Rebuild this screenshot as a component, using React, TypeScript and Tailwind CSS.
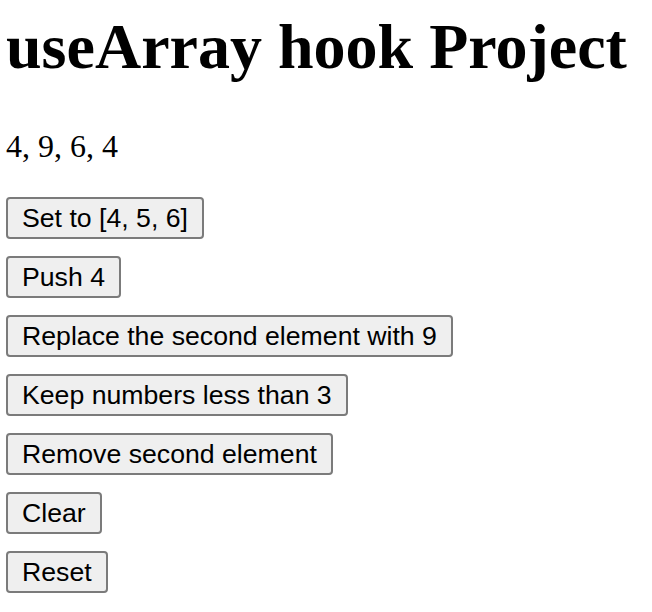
import React from 'react';

const buttons = [
  'Set to [4, 5, 6]',
  'Push 4',
  'Replace the second element with 9',
  'Keep numbers less than 3',
  'Remove second element',
  'Clear',
  'Reset',
];

export default function App() {
  return (
    <div className="min-h-screen bg-white pl-[6px] pt-[10px] text-black">
      <h1 className="font-['Liberation_Serif',serif] text-[64px] font-bold leading-[74px]">
        useArray hook Project
      </h1>
      <p className="mt-[44px] font-['Liberation_Serif',serif] text-[32px] leading-[37px]">
        4, 9, 6, 4
      </p>
      <div className="mt-[32px] flex flex-col items-start gap-[17px]">
        {buttons.map(label => (
          <button
            key={label}
            className="h-[42px] rounded-[4px] border-2 border-[#7b7b7b] bg-[#efefef] px-[14px] font-['Liberation_Sans',Arial,sans-serif] text-[26.67px] leading-none text-black"
          >
            {label}
          </button>
        ))}
      </div>
    </div>
  );
}
